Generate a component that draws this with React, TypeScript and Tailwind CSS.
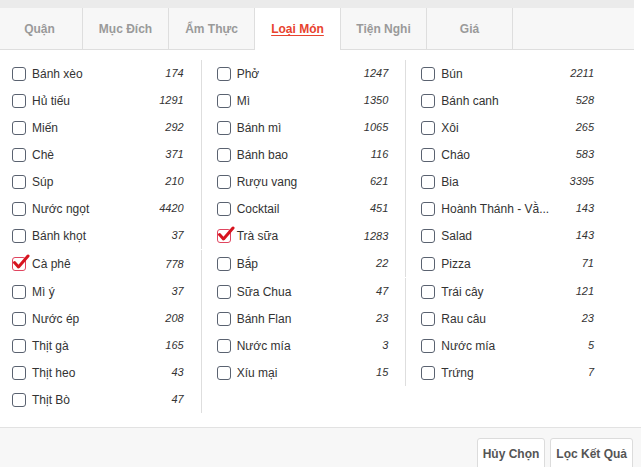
import React from 'react';

type Item = { name: string; count: number; checked?: boolean };

const tabs = ['Quận', 'Mục Đích', 'Ẩm Thực', 'Loại Món', 'Tiện Nghi', 'Giá'];
const activeTab = 'Loại Món';

// row-major order, 3 per row
const items: Item[] = [
  { name: 'Bánh xèo', count: 174 },
  { name: 'Phở', count: 1247 },
  { name: 'Bún', count: 2211 },
  { name: 'Hủ tiếu', count: 1291 },
  { name: 'Mì', count: 1350 },
  { name: 'Bánh canh', count: 528 },
  { name: 'Miến', count: 292 },
  { name: 'Bánh mì', count: 1065 },
  { name: 'Xôi', count: 265 },
  { name: 'Chè', count: 371 },
  { name: 'Bánh bao', count: 116 },
  { name: 'Cháo', count: 583 },
  { name: 'Súp', count: 210 },
  { name: 'Rượu vang', count: 621 },
  { name: 'Bia', count: 3395 },
  { name: 'Nước ngọt', count: 4420 },
  { name: 'Cocktail', count: 451 },
  { name: 'Hoành Thánh - Vằ...', count: 143 },
  { name: 'Bánh khọt', count: 37 },
  { name: 'Trà sữa', count: 1283, checked: true },
  { name: 'Salad', count: 143 },
  { name: 'Cà phê', count: 778, checked: true },
  { name: 'Bắp', count: 22 },
  { name: 'Pizza', count: 71 },
  { name: 'Mì ý', count: 37 },
  { name: 'Sữa Chua', count: 47 },
  { name: 'Trái cây', count: 121 },
  { name: 'Nước ép', count: 208 },
  { name: 'Bánh Flan', count: 23 },
  { name: 'Rau câu', count: 23 },
  { name: 'Thịt gà', count: 165 },
  { name: 'Nước mía', count: 3 },
  { name: 'Nước mía', count: 5 },
  { name: 'Thịt heo', count: 43 },
  { name: 'Xíu mại', count: 15 },
  { name: 'Trứng', count: 7 },
  { name: 'Thịt Bò', count: 47 },
];

function Checkbox({ checked }: { checked?: boolean }) {
  if (checked) {
    return (
      <span className="relative w-[14px] h-[14px] shrink-0 rounded-[3px] border-[1.5px] border-[#e0455f] bg-white">
        <svg className="absolute -left-[1px] -top-[5px]" width="18" height="18" viewBox="0 0 18 18">
          <path d="M2.5 9.5 L6.5 14 L16 3" fill="none" stroke="#d7141f" strokeWidth="3" strokeLinecap="round" strokeLinejoin="round" />
        </svg>
      </span>
    );
  }
  return <span className="w-[14px] h-[14px] shrink-0 rounded-[3px] border-[1.5px] border-[#5a6270] bg-white" />;
}

export default function App() {
  return (
    <div className="w-[641px] h-[467px] bg-white overflow-hidden flex flex-col font-['Liberation_Sans',Arial,sans-serif]">
      <div className="w-[634px] overflow-hidden">
        <div className="h-[8px] bg-[#ebebeb]" />
        <div className="flex h-[42px] -ml-[3px] bg-[#f7f7f7]">
          {tabs.map((t) => {
            const active = t === activeTab;
            return (
              <div
                key={t}
                className={`w-[86px] shrink-0 flex items-center justify-center text-[12px] font-bold border-r border-[#dedede] ${
                  active
                    ? 'bg-white text-[#e8432e] underline underline-offset-2'
                    : 'text-[#9a9a9a] border-b'
                }`}
              >
                {t}
              </div>
            );
          })}
          <div className="flex-1 border-b border-[#dedede]" />
        </div>
      </div>

      {/* Items */}
      <div className="mt-[10px] -ml-[3px] w-[614px] grid grid-cols-3 content-start">
        {items.map((it, i) => (
          <div
            key={i}
            className={`flex items-center pl-[15px] pr-[17px] ${it.checked ? 'h-[28px]' : 'h-[27px]'} ${
              i % 3 !== 2 ? 'border-r border-[#dedede]' : ''
            }`}
          >
            <Checkbox checked={it.checked} />
            <span className="ml-[6px] text-[12px] text-[#333] whitespace-nowrap">{it.name}</span>
            <span className="ml-auto pl-2 text-[11px] italic text-[#333]">{it.count}</span>
          </div>
        ))}
      </div>

      <div className="mt-auto h-[40px] border-t border-[#e2e2e2] bg-[#f7f7f7] flex justify-end items-start gap-[5px] pt-[10px] pr-[8px]">
        <button className="h-[32px] px-[5px] pt-[7px] leading-[16px] flex items-start border border-[#dcdcdc] rounded-[3px] bg-white text-[12px] font-bold text-[#555]">
          Hủy Chọn
        </button>
        <button className="h-[32px] px-[5px] pt-[7px] leading-[16px] flex items-start border border-[#dcdcdc] rounded-[3px] bg-white text-[12px] font-bold text-[#555]">
          Lọc Kết Quả
        </button>
      </div>
    </div>
  );
}
